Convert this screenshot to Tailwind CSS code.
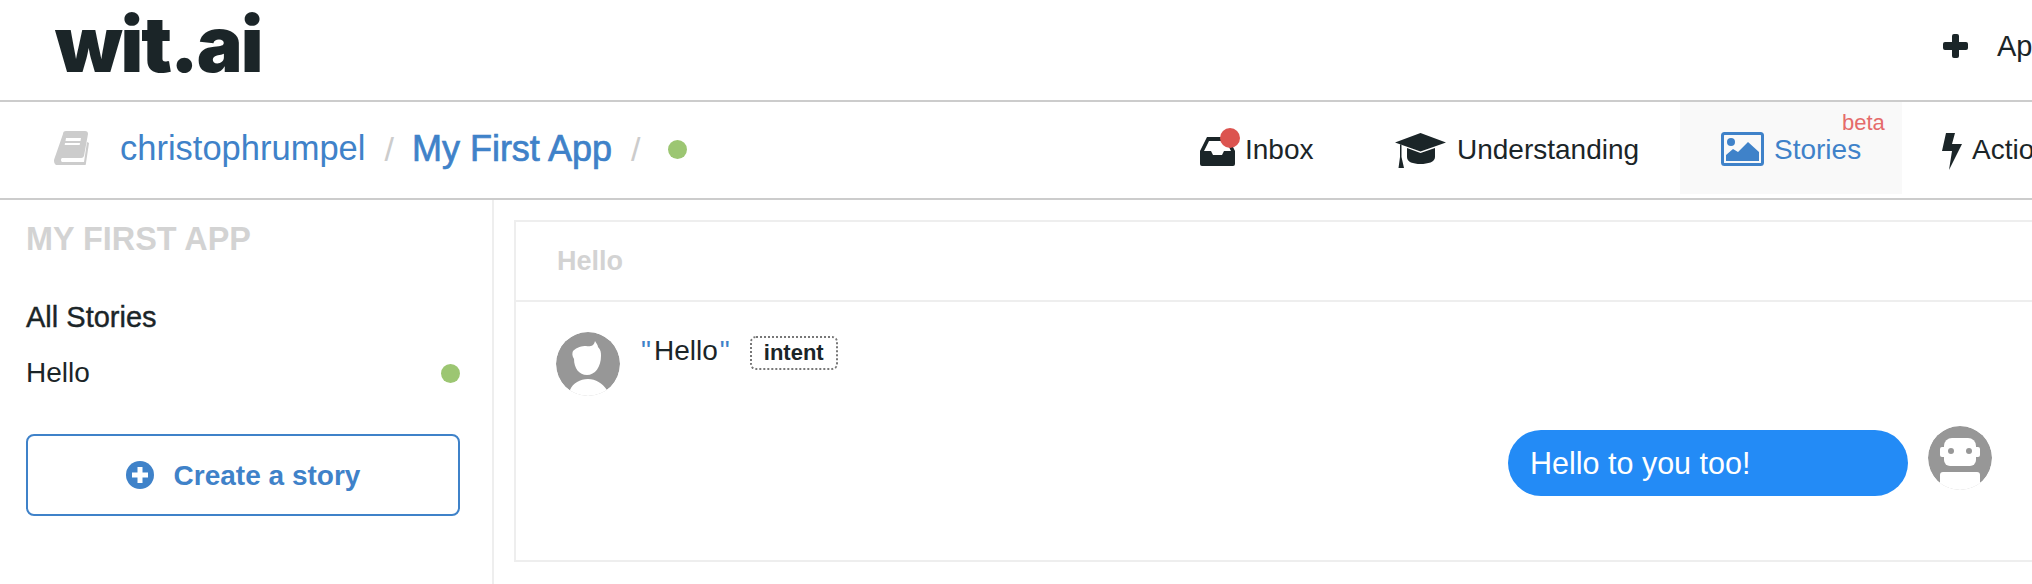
<!DOCTYPE html>
<html lang="en">
<head>
    <meta charset="UTF-8">
    <meta name="viewport" content="width=device-width, initial-scale=1.0">
    <title>Wit.ai Stories</title>
    <script src="https://cdn.jsdelivr.net/npm/@tailwindcss/browser@4"></script>
</head>
<body class="bg-white text-[#1b2528] font-['Liberation_Sans',Arial,sans-serif]">
<div class="w-[2032px] h-[584px] overflow-hidden flex flex-col">

    <!-- Top bar -->
    <header class="h-[102px] shrink-0 border-b-2 border-[#cccccc] flex items-center relative">
        <div class="ml-[55px] w-[1888px] shrink-0 font-['Inter',sans-serif] font-black text-[77px] leading-[90px] tracking-[-2px] mt-[-12px]">wit.ai</div>
        <svg class="shrink-0 mt-[-8px]" width="25" height="24" viewBox="0 0 25 24"><path d="M9 2a2 2 0 0 1 2-2h3a2 2 0 0 1 2 2v6h7a2 2 0 0 1 2 2v4a2 2 0 0 1-2 2h-7v6a2 2 0 0 1-2 2h-3a2 2 0 0 1-2-2v-6H2a2 2 0 0 1-2-2v-4a2 2 0 0 1 2-2h7z" fill="#1b2528"/></svg>
        <span class="ml-[29px] text-[29px] whitespace-nowrap mt-[-6px]">App</span>
    </header>

    <!-- Breadcrumb and tabs -->
    <nav class="h-[98px] shrink-0 border-b-2 border-[#cccccc] flex items-start">
        <div class="w-[1200px] shrink-0 h-[92px] flex items-center pl-[54px] text-[#3f82c9]">
            <svg class="shrink-0" width="37" height="34" viewBox="0 0 37 34"><path d="M9 3a3 3 0 0 1 3-3h19a3 3 0 0 1 3 3l-4 22a3 3 0 0 1-3 2H8a2.5 2.5 0 0 0 0 4h22l3-20 2 1-3 20a3 3 0 0 1-3 3H5a5 5 0 0 1-5-5 6 6 0 0 1 .3-2z" fill="#cccccc"/><path d="M12 7h15l-.5 3h-15zM11 12h15l-.3 2H10.700z" fill="#ffffff"/></svg>
            <span class="ml-[29px] mt-[2px] text-[34.5px]">christophrumpel</span>
            <span class="ml-[19px] mt-[2px] text-[34px] text-[#cccccc]">/</span>
            <span class="ml-[18px] mt-[2px] text-[36px] [-webkit-text-stroke:0.7px_#3f82c9]">My First App</span>
            <span class="ml-[19px] mt-[2px] text-[34px] text-[#cccccc]">/</span>
            <span class="ml-[28px] mt-[2px] w-[19px] h-[19px] rounded-full bg-[#9cc672]"></span>
        </div>

        <div class="w-[195px] shrink-0 h-[92px] flex items-center relative">
            <svg class="shrink-0 mt-[6px]" width="35" height="29" viewBox="0 0 35 29"><path fill-rule="evenodd" d="M7 0h21l7 14v13a2 2 0 0 1-2 2H2a2 2 0 0 1-2-2V14zM9 4 4 14h7l2 4h9l2-4h7L26 4z" fill="#1b2528"/></svg>
            <span class="absolute left-[20px] top-[26px] w-[20px] h-[20px] rounded-full bg-[#dc5450]"></span>
            <span class="ml-[10px] mt-[3px] text-[28px]">Inbox</span>
        </div>

        <div class="w-[285px] shrink-0 h-[92px] flex items-center">
            <svg class="shrink-0 mt-[4px]" width="51" height="35" viewBox="0 0 51 35"><path d="M25.500 0 51 9.500 25.500 18.500 0 9.500zM12 15l13.500 5L40 15v9c0 5-7 7-14.500 7S12 29 12 24zM5 11.500l1.500.6V24l2.500 11H3.500L5 24z" fill="#1b2528"/></svg>
            <span class="ml-[11px] mt-[3px] text-[28px]">Understanding</span>
        </div>

        <div class="w-[222px] shrink-0 h-[92px] bg-[#f9f9f9] flex items-center pl-[41px] relative text-[#3f82c9]">
            <svg class="shrink-0 mt-[2px]" width="43" height="34" viewBox="0 0 43 34"><rect x="1.500" y="1.500" width="40" height="31" rx="2" fill="none" stroke="#3f82c9" stroke-width="3"/><circle cx="10" cy="10" r="4" fill="#3f82c9"/><path d="M5 29v-6l7-6 5 3 10-10 11 10v9z" fill="#3f82c9"/></svg>
            <span class="ml-[10px] mt-[3px] text-[28px]">Stories</span>
            <span class="absolute left-[162px] top-[4px] text-[22px] text-[#e56b6b]">beta</span>
        </div>

        <div class="h-[92px] flex items-center pl-[40px] shrink-0">
            <svg class="shrink-0 mt-[6px]" width="20" height="37" viewBox="0 0 20 37"><path d="M4 0h9l-3 11h10L7 37l3-19H0z" fill="#1b2528"/></svg>
            <span class="ml-[10px] mt-[3px] text-[28px] whitespace-nowrap">Actions</span>
        </div>
    </nav>

    <div class="flex flex-1 min-h-0">
        <!-- Sidebar -->
        <aside class="w-[494px] shrink-0 border-r-2 border-[#eeeeee] pl-[26px] pr-[32px]">
            <h2 class="text-[32.400px] leading-[34px] mt-[22px] font-bold text-[#d3d3d3]">MY FIRST APP</h2>
            <div class="text-[29px] leading-[32px] mt-[45px] [-webkit-text-stroke:0.4px_#1b2528]">All Stories</div>
            <div class="flex items-center justify-between mt-[24px]">
                <span class="text-[28px] leading-[32px]">Hello</span>
                <span class="w-[19px] h-[19px] rounded-full bg-[#9cc672]"></span>
            </div>
            <button class="mt-[45px] w-full h-[82px] border-2 border-[#3f82c9] rounded-[8px] flex items-center justify-center text-[#3f82c9] font-bold text-[28px]">
                <svg class="mr-[20px]" width="28" height="28" viewBox="0 0 28 28"><circle cx="14" cy="14" r="14" fill="#3f82c9"/><path d="M11.500 6h5v5.500H22v5h-5.500V22h-5v-5.500H6v-5h5.500z" fill="#ffffff"/></svg>
                <span class="mt-[1px]">Create a story</span>
            </button>
        </aside>

        <!-- Story card -->
        <main class="flex-1 min-w-0 pl-[20px] pt-[20px]">
            <div class="w-[1600px] h-[342px] border-2 border-[#eeeeee]">
                <div class="h-[80px] border-b-2 border-[#eeeeee] pl-[41px] flex items-center">
                    <span class="text-[27px] font-bold text-[#d3d3d3] mt-[1px]">Hello</span>
                </div>
                <div class="flex items-start pl-[40px] pt-[30px]">
                    <svg class="shrink-0 rounded-full" width="64" height="64" viewBox="0 0 64 64"><circle cx="32" cy="32" r="32" fill="#979797"/><path d="M17 19c4-4 9-5 13-5 4 1 8 0 9-5 1 2 3 4 3 6 3 3 3 6 3 9 0 11-6 19-14 19S18 36 18 27c-2-3-2-6-1-8z" fill="#ffffff"/><path d="M0 64V58h14c3-7 10-11 18-11s14 4 19 11h13v6z" fill="#ffffff"/></svg>
                    <div class="ml-[21px] mt-[-1px] text-[28px] leading-[40px] flex items-center">
                        <span class="text-[#3f82c9]">"</span><span class="ml-[3px]">Hello</span><span class="ml-[2px] text-[#3f82c9]">"</span>
                        <span class="ml-[20px] mt-[3px] w-[88px] h-[34px] border-2 border-dotted border-[#777777] rounded-[6px] flex items-center justify-center text-[22px] leading-none font-bold">intent</span>
                    </div>
                </div>
                <div class="w-[1476px] flex justify-end items-start mt-[30px]">
                    <div class="w-[400px] h-[66px] mt-[4px] rounded-[33px] bg-[#238bf6] text-white text-[30.500px] leading-[66px] pl-[22px]">Hello to you too!</div>
                    <svg class="shrink-0 ml-[20px] rounded-full" width="64" height="64" viewBox="0 0 64 64"><circle cx="32" cy="32" r="32" fill="#979797"/><path d="M16 20a8 8 0 0 1 8-8h16a8 8 0 0 1 8 8v14a6 6 0 0 1-6 6H22a6 6 0 0 1-6-6z" fill="#ffffff"/><rect x="12" y="21" width="40" height="10" rx="2" fill="#ffffff"/><circle cx="23" cy="25" r="3" fill="#979797"/><circle cx="41" cy="25" r="3" fill="#979797"/><path d="M12 49a3 3 0 0 1 3-3h34a3 3 0 0 1 3 3v15H12z" fill="#ffffff"/></svg>
                </div>
            </div>
        </main>
    </div>
</div>
</body>
</html>
